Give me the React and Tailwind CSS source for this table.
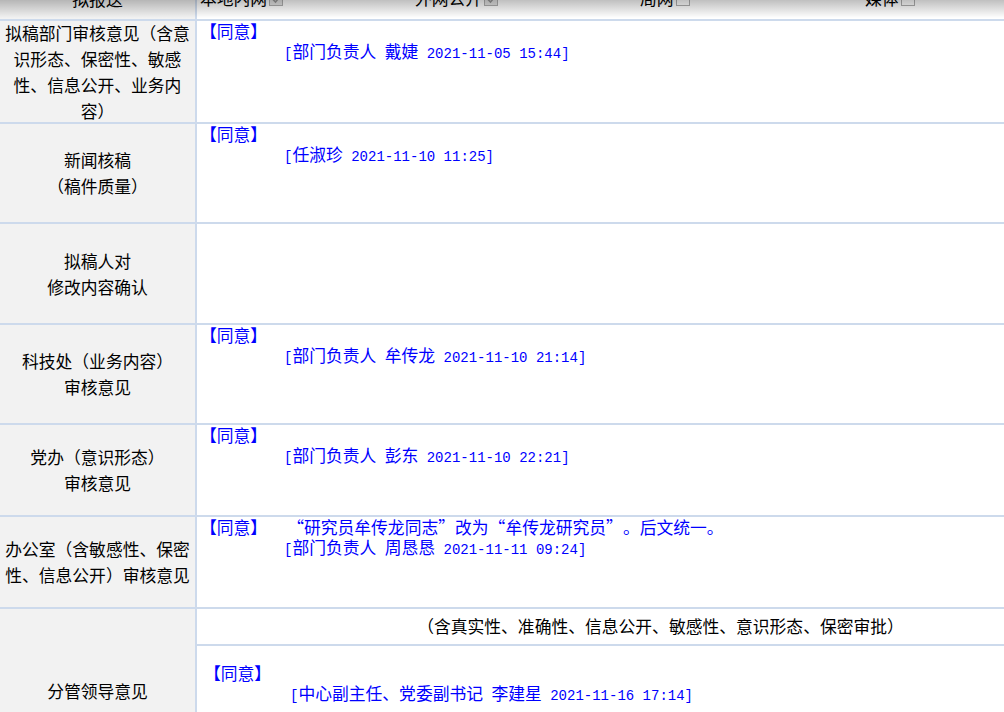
// 审批单的意见栏，页面已向下滚动一点，顶部一行被截掉一半。
const mono = "font-['Liberation_Mono',monospace] text-[14px]";

function Box({ checked }) {
  return (
    <span
      className={`ml-[2px] inline-flex h-[14px] w-[14px] items-center justify-center border border-[#b0b0b0] ${
        checked ? 'bg-[#e4e4e4]' : 'bg-white'
      }`}
    >
      {checked && (
        <svg width="9" height="9" viewBox="0 0 9 9">
          <path d="M1 4.5 L3.5 7 L8 1.5" fill="none" stroke="#9a9a9a" strokeWidth="1.6" />
        </svg>
      )}
    </span>
  );
}

// 全角引号：开引号靠右，闭引号靠左
function Q({ open }) {
  return (
    <span className={`inline-block w-[16.8px] ${open ? 'text-right' : 'text-left'}`}>
      {open ? '“' : '”'}
    </span>
  );
}

function Agree() {
  return <div className="leading-[20px] text-[#0000ff]">【同意】</div>;
}

// 签名行：[职务 姓名 日期 时间]
function Sig({ role, name, time, indent = 'pl-[84px]' }) {
  return (
    <div className={`${indent} leading-[20px] text-[#0000ff]`}>
      <span className={mono}>[</span>
      {role && (
        <>
          {role}
          <span className={mono}> </span>
        </>
      )}
      {name}
      <span className={mono}> {time}]</span>
    </div>
  );
}

function Label({ children }) {
  return (
    <div className="flex items-center justify-center bg-[#f2f2f2] px-[4px] text-center leading-[26px]">
      <div>{children}</div>
    </div>
  );
}

export default function App() {
  return (
    <div className="relative h-[712px] w-[1004px] overflow-hidden bg-white font-['Noto_Sans_CJK_SC',sans-serif] text-[16.8px] text-black">
      <div className="-mt-[21px] grid w-[1124px] grid-cols-[195px_1fr] grid-rows-[40px_101px_98px_99px_98px_90px_90px_164px] gap-[2px] bg-[#cddaec]">
        {/* 顶部一行（被截断） */}
        <Label>拟报送</Label>
        <div className="grid grid-cols-[215px_225px_225px_225px] items-center bg-white pl-[3px]">
          <span className="flex items-center">本地内网<Box checked /></span>
          <span className="flex items-center">外网公开<Box checked /></span>
          <span className="flex items-center">局网<Box /></span>
          <span className="flex items-center">媒体<Box /></span>
        </div>

        <Label>拟稿部门审核意见（含意识形态、保密性、敏感性、信息公开、业务内容）</Label>
        <div className="bg-white pl-[3px]">
          <Agree />
          <Sig role="部门负责人" name="戴婕" time="2021-11-05 15:44" />
        </div>

        <Label>
          新闻核稿
          <br />
          （稿件质量）
        </Label>
        <div className="bg-white pl-[3px]">
          <Agree />
          <Sig name="任淑珍" time="2021-11-10 11:25" />
        </div>

        <Label>
          拟稿人对
          <br />
          修改内容确认
        </Label>
        <div className="bg-white" />

        <Label>
          科技处（业务内容）
          <br />
          审核意见
        </Label>
        <div className="bg-white pl-[3px]">
          <Agree />
          <Sig role="部门负责人" name="牟传龙" time="2021-11-10 21:14" />
        </div>

        <Label>
          党办（意识形态）
          <br />
          审核意见
        </Label>
        <div className="bg-white pl-[3px]">
          <Agree />
          <Sig role="部门负责人" name="彭东" time="2021-11-10 22:21" />
        </div>

        <Label>办公室（含敏感性、保密性、信息公开）审核意见</Label>
        <div className="bg-white pl-[3px]">
          <div className="flex leading-[20px] text-[#0000ff]">
            <span>【同意】</span>
            <span className="ml-[20px]">
              <Q open />研究员牟传龙同志<Q />改为<Q open />牟传龙研究员<Q />。后文统一。
            </span>
          </div>
          <Sig role="部门负责人" name="周恳恳" time="2021-11-11 09:24" />
        </div>

        <Label>分管领导意见</Label>
        <div className="flex flex-col gap-[2px]">
          <div className="flex h-[35px] items-center justify-center bg-white">
            （含真实性、准确性、信息公开、敏感性、意识形态、保密审批）
          </div>
          <div className="flex-1 bg-white pl-[7px] pt-[17px]">
            <Agree />
            <Sig role="中心副主任、党委副书记" name="李建星" time="2021-11-16 17:14" indent="pl-[86px]" />
          </div>
        </div>
      </div>

      {/* 顶部浮动栏投下的阴影 */}
      <div className="pointer-events-none absolute inset-x-0 top-0 h-[18px] bg-linear-to-b from-black/25 to-transparent" />
    </div>
  );
}
